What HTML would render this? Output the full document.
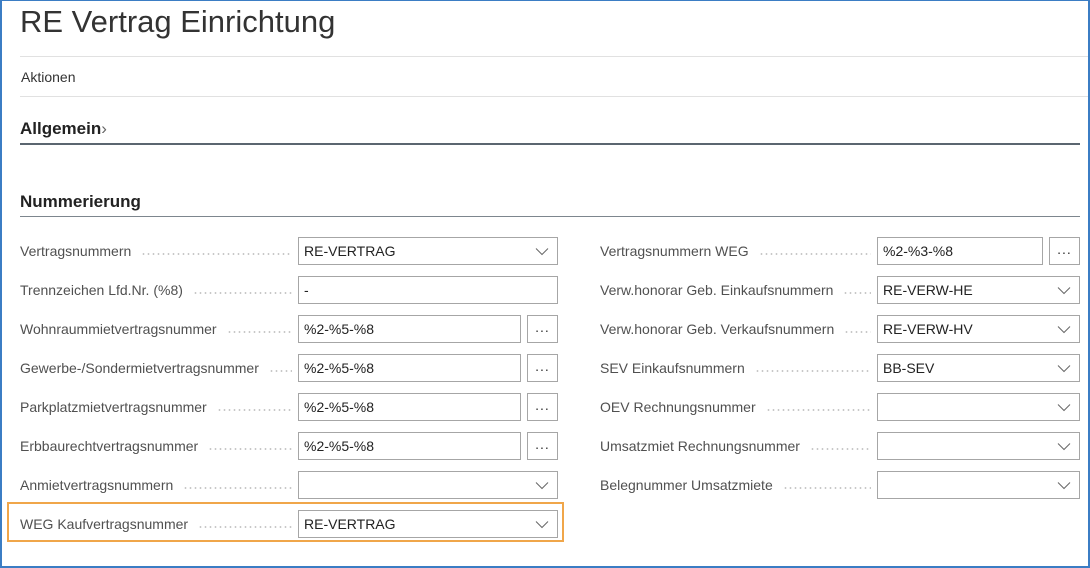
<!DOCTYPE html>
<html><head><meta charset="utf-8"><style>
*{margin:0;padding:0;box-sizing:border-box}
body{width:1090px;height:568px;overflow:hidden;background:#fff;font-family:"Liberation Sans",sans-serif;position:relative}
.frame{position:absolute;left:0;top:0;width:1090px;height:568px;border:2px solid #3b7dc4;border-top-width:1px}
.a{position:absolute}
.lbl{position:absolute;font-size:14px;color:#505050;height:28px;line-height:28px;display:flex;align-items:center}
.lbl span.d{flex:1;margin:0 6px 0 10px;height:2px;position:relative;top:3px;background-image:radial-gradient(circle,#c8c8c8 0.8px,transparent 1px);background-size:5px 2px;background-repeat:repeat-x}
.inp{position:absolute;height:28px;border:1px solid #a6a6a6;background:#fff;font-size:14px;color:#222;line-height:27px;padding-left:5px}
.btn{position:absolute;width:31px;height:28px;border:1px solid #a6a6a6;background:#fff;text-align:center;font-size:14px;line-height:22px;color:#333;letter-spacing:1px}
.chev{position:absolute;right:8px;top:9px}
</style></head><body>
<div class="frame"></div>
<div class="a" style="left:20px;top:4px;font-size:31px;color:#333;font-weight:300">RE Vertrag Einrichtung</div>
<div class="a" style="left:20px;top:56px;width:1068px;height:1px;background:#e1e1e1"></div>
<div class="a" style="left:21px;top:69px;font-size:14px;color:#333">Aktionen</div>
<div class="a" style="left:20px;top:96px;width:1068px;height:1px;background:#e1e1e1"></div>
<div class="a" style="left:20px;top:119px;font-size:17px;color:#222;font-weight:bold">Allgemein<span style="color:#666;font-size:17px;font-weight:normal">&#x203A;</span></div>
<div class="a" style="left:20px;top:143px;width:1060px;height:2px;background:#5b6670"></div>
<div class="a" style="left:20px;top:192px;font-size:17px;color:#222;font-weight:bold">Nummerierung</div>
<div class="a" style="left:20px;top:216px;width:1060px;height:1px;background:#7d868e"></div>
<div class="a" style="left:7px;top:502px;width:557px;height:40px;border:2px solid #f0a64a"></div>

<div id="c"></div>
<script>
var chev='<svg class="chev" width="14" height="9" viewBox="0 0 14 9"><path d="M1 1.5L7 7.5L13 1.5" fill="none" stroke="#666" stroke-width="1"/></svg>';
var L=[["Vertragsnummern","RE-VERTRAG","d"],["Trennzeichen Lfd.Nr. (%8)","-","t"],["Wohnraummietvertragsnummer","%2-%5-%8","b"],["Gewerbe-/Sondermietvertragsnummer","%2-%5-%8","b"],["Parkplatzmietvertragsnummer","%2-%5-%8","b"],["Erbbaurechtvertragsnummer","%2-%5-%8","b"],["Anmietvertragsnummern","","d"],["WEG Kaufvertragsnummer","RE-VERTRAG","d"]];
var R=[["Vertragsnummern WEG","%2-%3-%8","b"],["Verw.honorar Geb. Einkaufsnummern","RE-VERW-HE","d"],["Verw.honorar Geb. Verkaufsnummern","RE-VERW-HV","d"],["SEV Einkaufsnummern","BB-SEV","d"],["OEV Rechnungsnummer","","d"],["Umsatzmiet Rechnungsnummer","","d"],["Belegnummer Umsatzmiete","","d"]];
var h='';
function col(arr,lx,ix,iw){arr.forEach(function(r,i){var y=237+i*39;
h+='<div class="lbl" style="left:'+lx+'px;top:'+y+'px;width:'+(ix-lx)+'px">'+r[0]+'<span class="d"></span></div>';
if(r[2]=='b'){h+='<div class="inp" style="left:'+ix+'px;top:'+y+'px;width:'+(iw-37)+'px">'+r[1]+'</div><div class="btn" style="left:'+(ix+iw-31)+'px;top:'+y+'px">...</div>';}
else h+='<div class="inp" style="left:'+ix+'px;top:'+y+'px;width:'+iw+'px">'+r[1]+(r[2]=='d'?chev:'')+'</div>';});}
col(L,20,298,260);col(R,600,877,203);
document.getElementById('c').innerHTML=h;
</script>
</body></html>
